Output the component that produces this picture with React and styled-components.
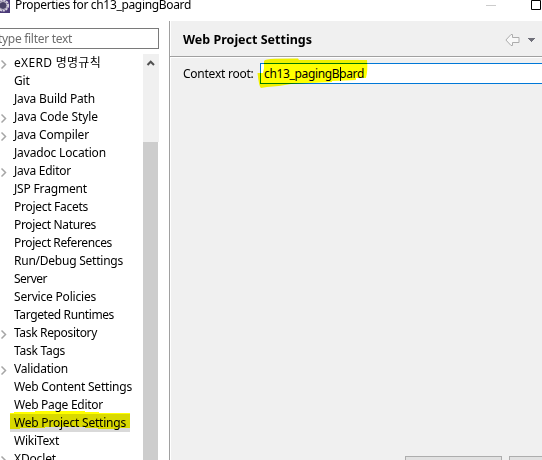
import React, { useLayoutEffect, useRef, useState } from "react";
import styled, { createGlobalStyle, css } from "styled-components";

const Global = createGlobalStyle`
  * { box-sizing: border-box; }
  body { margin: 0; overflow: hidden; background: #fff; }
`;

const Window = styled.div`
  display: flex;
  flex-direction: column;
  width: 542px;
  height: 460px;
  overflow: hidden;
  background: #fff;
  color: #000;
  font: 12px/18px "Noto Sans", "Noto Sans CJK KR", sans-serif;
`;

const TitleBar = styled.header`
  display: flex;
  align-items: flex-start;
  height: 21px;
  flex: none;
`;

const AppIcon = styled.svg`
  display: block;
  width: 10px;
  height: 13px;
  margin-right: 5px;
`;

const TitleText = styled.div`
  height: 18px;
  margin-top: -4px;
  flex: 1;
`;

const WindowControls = styled.svg`
  display: block;
  width: 56px;
  height: 12px;
`;

const Body = styled.div`
  display: flex;
  flex: 1;
  min-height: 0;
`;

const Sidebar = styled.aside`
  display: flex;
  flex-direction: column;
  width: 169px;
  padding-top: 7px;
`;

const Filter = styled.div`
  width: 159px;
  height: 21px;
  margin-bottom: 5px;
  border: 1px solid #7a7a7a;
  border-left: 0;
  color: #6d6d6d;
  line-height: 19px;
  overflow: hidden;
`;

const FilterText = styled.div`
  margin-left: -2px;
`;

const TreeArea = styled.div`
  display: flex;
  flex: 1;
  min-height: 0;
  overflow: hidden;
`;

const Tree = styled.ul`
  width: 143px;
  margin: 0;
  padding: 0;
  list-style: none;
`;

const Row = styled.li`
  display: flex;
  align-items: center;
  height: 18px;
`;

const Expander = styled.svg`
  display: block;
  flex: none;
  width: 10px;
  height: 18px;
`;

const RowLabel = styled.div`
  position: relative;
  height: 18px;
  padding: 0 4px;
  ${(p) =>
    p.$selected &&
    css`
      width: 120px;
      background: #d9d9d9;
    `}
`;

const Scrollbar = styled.div`
  display: flex;
  flex-direction: column;
  width: 16px;
  background: #f0f0f0;
`;

const ScrollArrow = styled.svg`
  display: block;
  width: 16px;
  height: 88px;
  flex: none;
`;

const ScrollThumb = styled.div`
  flex: 1;
  background: #cdcdcd;
  border-right: 1px solid #fff;
`;

const Page = styled.main`
  display: flex;
  flex-direction: column;
  flex: 1;
  min-width: 0;
  border-left: 1px solid #a0a0a0;
  box-shadow: inset 1px 0 #fff;
  background: #f0f0f0;
  background-clip: padding-box;
`;

const PageHeader = styled.div`
  display: flex;
  align-items: center;
  height: 37px;
  padding: 2px 5px 0 13px;
  border-bottom: 1px solid #fff;
  box-shadow: inset 0 -1px #a0a0a0;
`;

const PageTitle = styled.h1`
  flex: 1;
  margin: 0;
  font-size: 12.5px;
  font-weight: 700;
`;

const NavIcons = styled.svg`
  display: block;
  width: 32px;
  height: 14px;
`;

const Field = styled.div`
  display: flex;
  align-items: center;
  height: 21px;
  margin-top: 5px;
  padding-left: 13px;
`;

const FieldLabel = styled.label`
  width: 77px;
`;

const Input = styled.div`
  position: relative;
  flex: 1;
  height: 21px;
  border: 1px solid #0078d7;
  border-right: 0;
  background: #fff;
  padding-left: 3px;
  line-height: 19px;
`;

const Caret = styled.span`
  position: absolute;
  left: 79px;
  top: 3px;
  width: 1px;
  height: 14px;
  background: #000;
`;

const Marker = styled.svg`
  position: absolute;
  left: ${(p) => p.$left}px;
  top: ${(p) => p.$top}px;
  mix-blend-mode: multiply;
  pointer-events: none;
  overflow: visible;
`;

const ButtonBar = styled.div`
  display: flex;
  gap: 7px;
  height: 4px;
  margin-top: auto;
  padding-left: 235px;
  overflow: hidden;
`;

const Button = styled.div`
  flex: none;
  width: 97px;
  height: 23px;
  border: 1px solid #adadad;
  background: #e1e1e1;
`;

const TextRun = styled.span`
  display: inline-block;
  white-space: pre;
`;

/* Tracks a label so that it fills the given advance width. */
function Tracked({ width, children }) {
  const ref = useRef(null);
  const [spacing, setSpacing] = useState(0);
  useLayoutEffect(() => {
    const natural = ref.current.getBoundingClientRect().width;
    setSpacing((width - natural) / children.length);
  }, [width, children]);
  return (
    <TextRun ref={ref} style={{ letterSpacing: `${spacing}px` }}>
      {children}
    </TextRun>
  );
}

const items = [
  ["eXERD 명명규칙", 87, true],
  ["Git", 15.5],
  ["Java Build Path", 81],
  ["Java Code Style", 84, true],
  ["Java Compiler", 75, true],
  ["Javadoc Location", 92],
  ["Java Editor", 57, true],
  ["JSP Fragment", 73],
  ["Project Facets", 74],
  ["Project Natures", 82],
  ["Project References", 98],
  ["Run/Debug Settings", 109],
  ["Server", 33],
  ["Service Policies", 82],
  ["Targeted Runtimes", 100],
  ["Task Repository", 83, true],
  ["Task Tags", 51],
  ["Validation", 54, true],
  ["Web Content Settings", 118],
  ["Web Page Editor", 89],
  ["Web Project Settings", 112],
  ["WikiText", 45],
  ["XDoclet", 42, true],
];

export default function App() {
  return (
    <Window>
      <Global />
      <TitleBar>
        <AppIcon viewBox="0 0 10 13">
          <rect width="10" height="13" fill="#4b3a78" />
          <circle cx="3" cy="5.5" r="5" fill="none" stroke="#d8d3e0" strokeWidth="2.2" strokeDasharray="2.2 0.7" />
          <circle cx="3" cy="5.5" r="4" fill="#4a4268" stroke="#bdb7c7" strokeWidth="1" />
        </AppIcon>
        <TitleText>
          <Tracked width={176}>Properties for ch13_pagingBoard</Tracked>
        </TitleText>
        <WindowControls viewBox="0 0 56 12">
          <path d="M0 5.5h10" stroke="#ccc" />
          <path d="M45.5 .5h9v9h-9z" fill="none" stroke="#000" />
        </WindowControls>
      </TitleBar>
      <Body>
        <Sidebar>
          <Filter>
            <FilterText>
              <Tracked width={74}>type filter text</Tracked>
            </FilterText>
          </Filter>
          <TreeArea>
            <Tree>
              {items.map(([name, width, expandable]) => {
                const selected = name === "Web Project Settings";
                return (
                  <Row key={name}>
                    <Expander viewBox="0 0 10 18">
                      {expandable && <path d="M1.5 6.5 5.5 10.5 1.5 14.5" fill="none" stroke="#a6a6a6" strokeWidth="1.5" />}
                    </Expander>
                    <RowLabel $selected={selected}>
                      <Tracked width={width}>{name}</Tracked>
                      {selected && (
                        <Marker $left={0} $top={-3} width="120" height="19">
                          <path d="M0 2H4V1H25V0H75V1H89V2H120V17H108V18H88V17H75V16H35V17H10V18H0Z" fill="#ff0" />
                        </Marker>
                      )}
                    </RowLabel>
                  </Row>
                );
              })}
            </Tree>
            <Scrollbar>
              <ScrollArrow viewBox="0 0 16 88">
                <path d="M4.5 11 7.7 7.7 11 11" fill="none" stroke="#505050" strokeWidth="2" />
              </ScrollArrow>
              <ScrollThumb />
            </Scrollbar>
          </TreeArea>
        </Sidebar>
        <Page>
          <PageHeader>
            <PageTitle>
              <Tracked width={129}>Web Project Settings</Tracked>
            </PageTitle>
            <NavIcons viewBox="0 0 32 14">
              <path d="M.9 7 6 1.5H7.5V4.5H14V9.5H7.5V12.5H6Z" fill="#f8f8f8" stroke="#acacac" />
              <path d="M23 5h7v1h-1v1h-1v1h-1v1h-1v-1h-1v-1h-1v-1h-1z" fill="#70707a" />
            </NavIcons>
          </PageHeader>
          <Field>
            <FieldLabel>
              <Tracked width={70.5}>Context root:</Tracked>
            </FieldLabel>
            <Input>
              <Tracked width={100}>ch13_pagingBoard</Tracked>
              <Caret />
              <Marker $left={-4} $top={-6} width="111" height="31">
                <path d="M7 3 Q8 1 18 .8L41 .5 42 2H110Q111 12 109 20L99 20V22L75 23V24L34 26 22 28 10 29 4 30Q2 29 .5 15H6L7 10Z" fill="#ff0" />
              </Marker>
            </Input>
          </Field>
          <ButtonBar>
            <Button />
            <Button />
          </ButtonBar>
        </Page>
      </Body>
    </Window>
  );
}
